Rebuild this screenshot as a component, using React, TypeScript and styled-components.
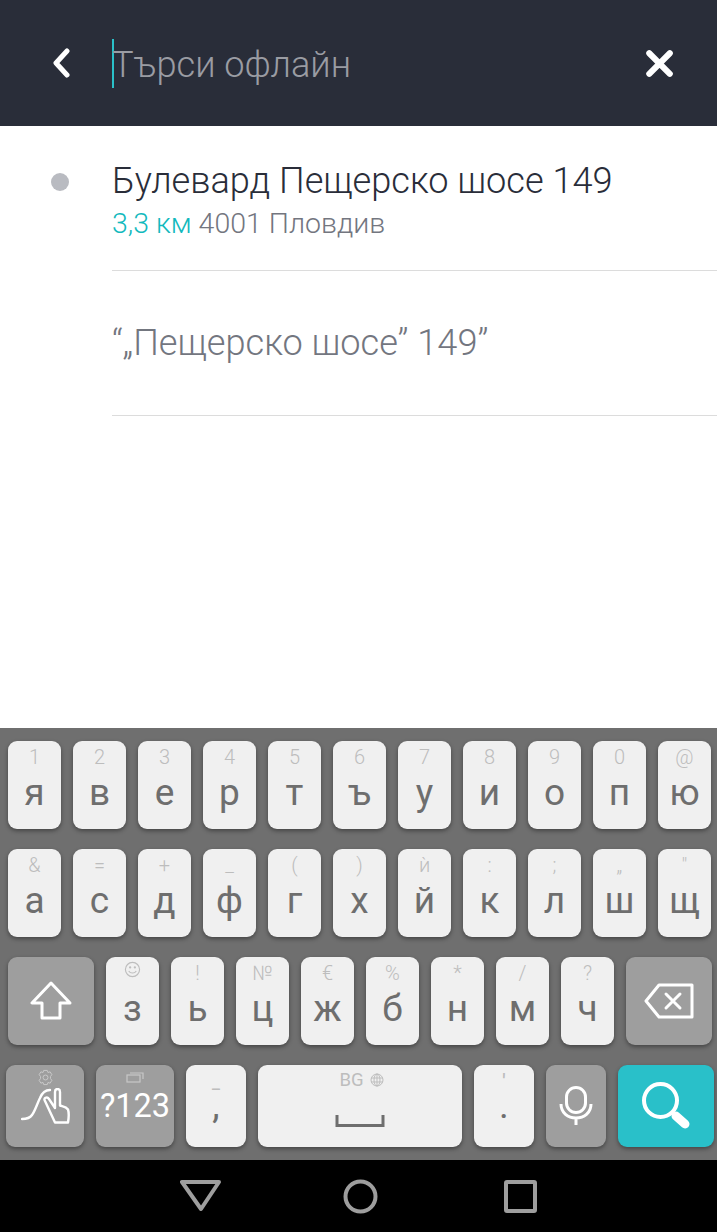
import React from "react";
import styled, { createGlobalStyle } from "styled-components";

const GlobalStyle = createGlobalStyle`
  html, body {
    margin: 0;
    padding: 0;
    background: #fff;
  }
  * {
    box-sizing: border-box;
  }
`;

const Screen = styled.div`
  width: 717px;
  height: 1232px;
  display: flex;
  flex-direction: column;
  font-family: Roboto, "Noto Sans", sans-serif;
  overflow: hidden;
`;

const TopBar = styled.header`
  height: 126px;
  flex: none;
  background: #292d39;
  display: flex;
  align-items: center;
  padding: 0 43px 0 52px;
`;

const BackButton = styled.div`
  width: 60px;
  height: 30px;
  margin-top: -1px;
  flex: none;
  display: flex;
`;

const SearchField = styled.div`
  flex: 1;
  height: 49px;
  display: flex;
  align-items: center;
  border-left: 2px solid #2ac1c9;
  font-size: 36.2px;
  font-weight: 300;
  color: #9a9ca3;
  white-space: nowrap;
`;

const Placeholder = styled.span`
  margin: 3px 0 0 -2px;
`;

const ClearButton = styled.div`
  width: 28px;
  height: 28px;
  flex: none;
  display: flex;
`;

const Results = styled.main`
  flex: 1;
  background: #fff;
`;

const ResultRow = styled.div`
  height: 145px;
  display: flex;
`;

const Leading = styled.div`
  width: 112px;
  flex: none;
  padding: 47px 0 0 51px;
`;

const Dot = styled.div`
  width: 18px;
  height: 18px;
  border-radius: 50%;
  background: #b9bbc1;
`;

const ResultBody = styled.div<{ $centered?: boolean }>`
  flex: 1;
  border-bottom: 1px solid #dcdcdc;
  display: flex;
  flex-direction: column;
  justify-content: ${(p) => (p.$centered ? "center" : "flex-start")};
  padding-top: ${(p) => (p.$centered ? "0" : "33px")};
  padding-bottom: ${(p) => (p.$centered ? "1px" : "0")};
`;

const Title = styled.div<{ $muted?: boolean }>`
  font-size: 36.15px;
  line-height: 44px;
  font-weight: 300;
  color: ${(p) => (p.$muted ? "#73767f" : "#292d39")};
`;

const Subtitle = styled.div`
  font-size: 28.5px;
  line-height: 32px;
  margin-top: 5px;
  font-weight: 300;
  color: #73767f;
`;

const Distance = styled.span`
  color: #12b9bd;
`;

const Keyboard = styled.section`
  height: 432px;
  flex: none;
  background: #6f6f6f;
  padding-top: 13px;
  display: flex;
  flex-direction: column;
  gap: 20px;
`;

const KeyRow = styled.div<{ $inset: number }>`
  display: flex;
  gap: 12px;
  padding-left: ${(p) => p.$inset}px;
`;

const Key = styled.div<{ $w: number; $h?: number; $kind?: "light" | "dark" | "accent" }>`
  width: ${(p) => p.$w}px;
  height: ${(p) => p.$h ?? 88}px;
  flex: none;
  border-radius: 9px;
  display: flex;
  flex-direction: column;
  align-items: center;
  background: ${(p) =>
    p.$kind === "dark" ? "#9e9e9e" : p.$kind === "accent" ? "#29c0c9" : "#f0f0f0"};
  box-shadow: 0 2px 4px rgba(0, 0, 0, 0.38);
`;

const Hint = styled.span`
  height: 32px;
  flex: none;
  font-size: 20px;
  line-height: 32px;
  color: #bdbdbd;
  font-weight: 300;
`;

const MarkHint = styled.span<{ $top: number; $size: number }>`
  height: 14px;
  flex: none;
  margin-top: ${(p) => p.$top}px;
  font-size: ${(p) => p.$size}px;
  line-height: 14px;
  color: #bdbdbd;
  font-weight: 500;
`;

const HintIcon = styled.div`
  height: 32px;
  padding-bottom: 7px;
  flex: none;
  display: flex;
  align-items: center;
`;

const KeyLabel = styled.span`
  font-size: 37px;
  line-height: 44px;
  margin-top: -2px;
  color: #6e6e6e;
`;

const MarkLabel = styled.span<{ $gap: number }>`
  font-size: 37px;
  line-height: 17px;
  margin-top: ${(p) => p.$gap}px;
  color: #6e6e6e;
`;

const WideLabel = styled.span`
  font-size: 32.5px;
  line-height: 40px;
  color: #fff;
  margin-top: -3px;
`;

const SpaceHint = styled.div`
  height: 30px;
  padding-left: 3px;
  display: flex;
  align-items: center;
  gap: 6px;
  font-size: 18.5px;
  color: #bdbdbd;
`;

const IconCenter = styled.div`
  flex: 1;
  display: flex;
  align-items: center;
  justify-content: center;
  width: 100%;
`;

const IconSlot = styled.div`
  height: 24px;
  flex: none;
  display: flex;
  align-items: center;
  justify-content: center;
`;

const GestureIcon = styled.svg`
  margin-top: -1px;
`;

const NavBar = styled.nav`
  height: 72px;
  flex: none;
  background: #000;
  display: flex;
  align-items: center;
  padding-left: 180px;
`;

const NavItem = styled.div<{ $w: number }>`
  width: ${(p) => p.$w}px;
  flex: none;
  display: flex;
`;

const row1: [string, string][] = [
  ["1", "я"], ["2", "в"], ["3", "е"], ["4", "р"], ["5", "т"], ["6", "ъ"],
  ["7", "у"], ["8", "и"], ["9", "о"], ["0", "п"], ["@", "ю"],
];

const row2: [string, string][] = [
  ["&", "а"], ["=", "с"], ["+", "д"], ["_", "ф"], ["(", "г"], [")", "х"],
  ["ѝ", "й"], [":", "к"], [";", "л"], ["„", "ш"], ["″", "щ"],
];

const row3: [string, string][] = [
  ["!", "ь"], ["№", "ц"], ["€", "ж"], ["%", "б"], ["*", "н"], ["/", "м"], ["?", "ч"],
];

export default function App() {
  return (
    <>
      <GlobalStyle />
      <Screen>
        <TopBar>
          <BackButton>
            <svg width="18" height="30" viewBox="0 0 18 30" fill="none">
              <path d="M15 3 4 15l11 12" stroke="#fff" strokeWidth="5" strokeLinecap="round" strokeLinejoin="round" />
            </svg>
          </BackButton>
          <SearchField>
            <Placeholder>Търси офлайн</Placeholder>
          </SearchField>
          <ClearButton>
            <svg width="30" height="30" viewBox="0 0 30 30" fill="none">
              <path d="M3.500 3.500l22 22M25.500 3.500l-22 22" stroke="#fff" strokeWidth="6.500" strokeLinecap="round" />
            </svg>
          </ClearButton>
        </TopBar>

        <Results>
          <ResultRow>
            <Leading>
              <Dot />
            </Leading>
            <ResultBody>
              <Title>Булевард Пещерско шосе 149</Title>
              <Subtitle>
                <Distance>3,3 км</Distance> 4001 Пловдив
              </Subtitle>
            </ResultBody>
          </ResultRow>
          <ResultRow>
            <Leading />
            <ResultBody $centered>
              <Title $muted>“„Пещерско шосе” 149”</Title>
            </ResultBody>
          </ResultRow>
        </Results>

        <Keyboard>
          <KeyRow $inset={8}>
            {row1.map(([hint, label]) => (
              <Key key={label} $w={53}>
                <Hint>{hint}</Hint>
                <KeyLabel>{label}</KeyLabel>
              </Key>
            ))}
          </KeyRow>
          <KeyRow $inset={8}>
            {row2.map(([hint, label]) => (
              <Key key={label} $w={53}>
                <Hint>{hint}</Hint>
                <KeyLabel>{label}</KeyLabel>
              </Key>
            ))}
          </KeyRow>
          <KeyRow $inset={8}>
            <Key $w={86} $kind="dark">
              <IconCenter>
                <svg width="42" height="40" viewBox="0 0 42 40" fill="none">
                  <path d="M21 2 2 22h10v15h18V22h10z" stroke="#fff" strokeWidth="3" strokeLinejoin="round" />
                </svg>
              </IconCenter>
            </Key>
            <Key $w={53}>
              <HintIcon>
                <svg width="17" height="17" viewBox="0 0 18 18" fill="none" stroke="#bdbdbd" strokeWidth="1.200">
                  <circle cx="9" cy="9" r="7.500" />
                  <path d="M5 10.500c1.800 3 6.200 3 8 0" />
                  <circle cx="6.500" cy="6.800" r="0.600" />
                  <circle cx="11.500" cy="6.800" r="0.600" />
                </svg>
              </HintIcon>
              <KeyLabel>з</KeyLabel>
            </Key>
            {row3.map(([hint, label]) => (
              <Key key={label} $w={53}>
                <Hint>{hint}</Hint>
                <KeyLabel>{label}</KeyLabel>
              </Key>
            ))}
            <Key $w={86} $kind="dark">
              <IconCenter>
                <svg width="50" height="36" viewBox="0 0 50 36" fill="none" stroke="#fff" strokeWidth="3">
                  <path d="M15 2h33v32H15L2 18z" strokeLinejoin="round" />
                  <path d="M22 11l14 14M36 11 22 25" strokeLinecap="round" />
                </svg>
              </IconCenter>
            </Key>
          </KeyRow>
          <KeyRow $inset={6}>
            <Key $w={78} $h={82} $kind="dark">
              <IconSlot>
                <svg width="17" height="17" viewBox="0 0 24 24" fill="none" stroke="#c8c8c8" strokeWidth="1.400" strokeLinejoin="round">
                  <circle cx="12" cy="12" r="3.500" />
                  <path d="M9.500 2h5l1 3 3-1 2.500 4-2 2.500v3l2 2.500-2.500 4-3-1-1 3h-5l-1-3-3 1L3 16l2-2.500v-3L3 8l2.500-4 3 1z" />
                </svg>
              </IconSlot>
              <GestureIcon width="49" height="36" viewBox="0 0 49 36" fill="none" stroke="#fff" strokeWidth="2.400" strokeLinecap="round" strokeLinejoin="round">
                <path d="M1 31c5 0 8-1 10-4 3-4 5-11 8-17 2-5 5-8 10-8" />
                <path d="M34 34.500h13c1-6 1-10 0-13-2-3-5-3-8-4V4c0-4-5-4-5 0v16l-6-9c-2-3-6-1-4 2z" />
              </GestureIcon>
            </Key>
            <Key $w={78} $h={82} $kind="dark">
              <IconSlot>
                <svg width="18" height="12" viewBox="0 0 18 12" fill="none" stroke="#c8c8c8" strokeWidth="1.200">
                  <rect x="1" y="4" width="13" height="7" />
                  <path d="M4 2h13v6" />
                </svg>
              </IconSlot>
              <WideLabel>?123</WideLabel>
            </Key>
            <Key $w={60} $h={82}>
              <MarkHint $top={18} $size={16}>–</MarkHint>
              <MarkLabel $gap={0}>,</MarkLabel>
            </Key>
            <Key $w={204} $h={82}>
              <SpaceHint>
                BG
                <svg width="14" height="14" viewBox="0 0 14 14" fill="none" stroke="#bdbdbd" strokeWidth="1">
                  <circle cx="7" cy="7" r="6" />
                  <ellipse cx="7" cy="7" rx="3" ry="6" />
                  <path d="M1 5h12M1 9h12M7 1v12" />
                </svg>
              </SpaceHint>
              <IconCenter>
                <svg width="50" height="12" viewBox="0 0 50 12" fill="none" stroke="#6e6e6e" strokeWidth="3">
                  <path d="M2 0v10.500h46V0" />
                </svg>
              </IconCenter>
            </Key>
            <Key $w={60} $h={82}>
              <MarkHint $top={9} $size={20}>'</MarkHint>
              <MarkLabel $gap={9}>.</MarkLabel>
            </Key>
            <Key $w={60} $h={82} $kind="dark">
              <IconCenter>
                <svg width="34" height="40" viewBox="0 0 34 40" fill="none" stroke="#fff" strokeWidth="3">
                  <rect x="7.500" y="1.500" width="19" height="25" rx="9.500" />
                  <path d="M2 18c0 9 7 14 15 14s15-5 15-14M17 32v7" />
                </svg>
              </IconCenter>
            </Key>
            <Key $w={96} $h={82} $kind="accent">
              <IconCenter>
                <svg width="48" height="48" viewBox="0 0 48 48" fill="none" stroke="#fff">
                  <circle cx="18.500" cy="18.500" r="16.500" strokeWidth="4" />
                  <path d="M29 30l4 3" strokeWidth="3" />
                  <path d="M34 34l9 8" strokeWidth="9" strokeLinecap="round" />
                </svg>
              </IconCenter>
            </Key>
          </KeyRow>
        </Keyboard>

        <NavBar>
          <NavItem $w={163}>
            <svg width="42" height="34" viewBox="0 0 42 34" fill="none" stroke="#9e9e9e" strokeWidth="4" strokeLinejoin="round">
              <path d="M2 3h37L21 30z" />
            </svg>
          </NavItem>
          <NavItem $w={161}>
            <svg width="35" height="35" viewBox="0 0 35 35" fill="none" stroke="#9e9e9e" strokeWidth="4">
              <circle cx="17.500" cy="17.500" r="15" />
            </svg>
          </NavItem>
          <NavItem $w={33}>
            <svg width="33" height="33" viewBox="0 0 33 33" fill="none" stroke="#9e9e9e" strokeWidth="4" strokeLinejoin="round">
              <rect x="2" y="2" width="29" height="29" rx="1" />
            </svg>
          </NavItem>
        </NavBar>
      </Screen>
    </>
  );
}
